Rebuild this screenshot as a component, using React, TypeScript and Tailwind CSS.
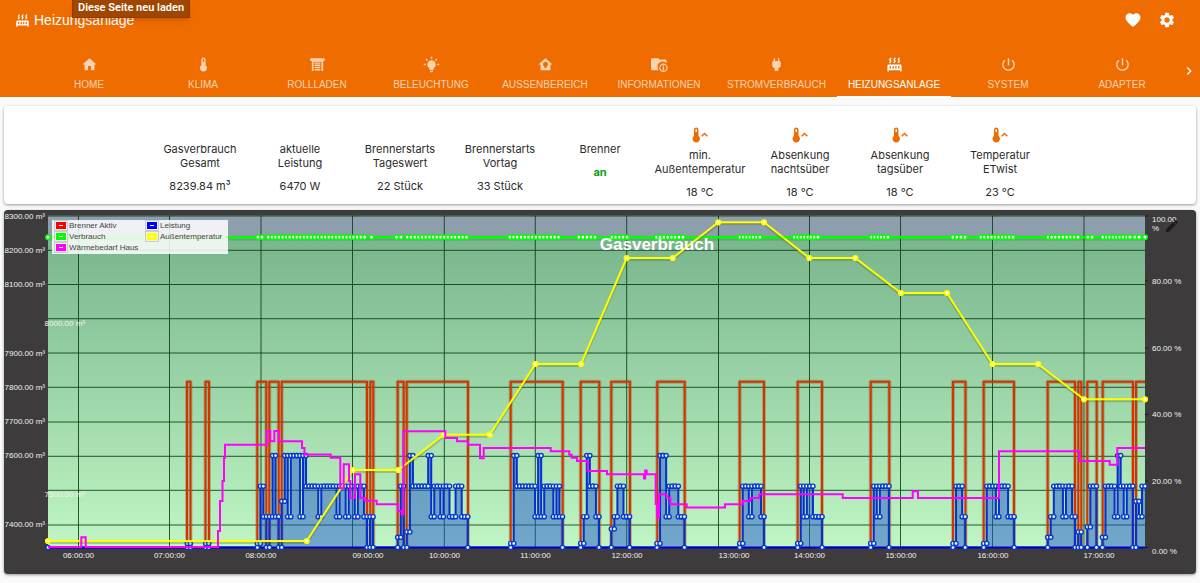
import React from "react";
import { MdChevronRight, MdFavorite, MdPowerSettingsNew, MdSettings } from "react-icons/md";

const PATHS = {
  home: "M10,20V14H14V20H19V12H22L12,3L2,12H5V20H10Z",
  thermometer:
    "M15 13V5A3 3 0 0 0 9 5V13A5 5 0 1 0 15 13M12 4A1 1 0 0 1 13 5V8H11V5A1 1 0 0 1 12 4Z",
  shutter:
    "M2 3H22V7H20V21H17.5V8H6.5V21H4V7H2V3M8 9H16V11H8V9M8 12H16V14H8V12M8 15H16V17H8V15M8 18H16V20.5H8V18Z",
  bulb: "M12,6A6,6 0 0,1 18,12C18,14.22 16.79,16.16 15,17.2V19A1,1 0 0,1 14,20H10A1,1 0 0,1 9,19V17.2C7.21,16.16 6,14.22 6,12A6,6 0 0,1 12,6M14,21V22A1,1 0 0,1 13,23H11A1,1 0 0,1 10,22V21H14M20,11H23V13H20V11M1,11H4V13H1V11M13,1V4H11V1H13M4.92,3.5L7.05,5.64L5.63,7.05L3.5,4.93L4.92,3.5M16.95,5.63L19.07,3.5L20.5,4.93L18.37,7.05L16.95,5.63Z",
  homeBulb:
    "M12 3L2 12H5V20H19V12H22L12 3M12 8A3.6 3.6 0 0 1 13.6 14.8V17H10.4V14.8A3.6 3.6 0 0 1 12 8Z",
  folderInfo:
    "M10 3L12 5H20A2 2 0 0 1 22 7V10.2A7 7 0 0 0 11 20H2A2 2 0 0 1 0 18V5A2 2 0 0 1 2 3H10M17.5 10.5A6 6 0 1 1 17.5 22.5A6 6 0 1 1 17.5 10.5M17.5 12.2A4.3 4.3 0 1 0 17.5 20.8A4.3 4.3 0 1 0 17.5 12.2M16.5 13H18.5V14.8H16.5V13M16.5 15.6H18.5V20H16.5V15.6Z",
  plug: "M16,7V3H14V7H10V3H8V7H8C7,7 6,8 6,9V14.5L9.5,18V21H14.5V18L18,14.5V9C18,8 17,7 16,7Z",
  radiator:
    "M7.95,3L6.53,5.19L7.95,7.4L5.95,10.5L4.22,9.6L5.64,7.39L4.22,5.19L6.22,2.09L7.95,3M13.95,2.89L12.53,5.1L13.95,7.3L11.95,10.4L10.22,9.5L11.64,7.3L10.22,5.1L12.22,2L13.95,2.89M20,2.89L18.56,5.1L20,7.3L18,10.4L16.25,9.5L17.67,7.3L16.25,5.1L18.25,2L20,2.89M2,22V14A2,2 0 0,1 4,12H20A2,2 0 0,1 22,14V22H20V20H4V22H2M6,14A1,1 0 0,0 5,15V17A1,1 0 0,0 7,17V15A1,1 0 0,0 6,14M10,14A1,1 0 0,0 9,15V17A1,1 0 0,0 11,17V15A1,1 0 0,0 10,14M14,14A1,1 0 0,0 13,15V17A1,1 0 0,0 15,17V15A1,1 0 0,0 14,14M18,14A1,1 0 0,0 17,15V17A1,1 0 0,0 19,17V15A1,1 0 0,0 18,14Z",
  thermoUp:
    "M10 13V5A3 3 0 0 0 4 5V13A5 5 0 1 0 10 13M7 4A1 1 0 0 1 8 5V8H6V5A1 1 0 0 1 7 4M14.9 14.4L13.5 13L18 8.5L22.5 13L21.1 14.4L18 11.3L14.9 14.4Z",
  pencil:
    "M20.71,7.04C21.1,6.65 21.1,6 20.71,5.63L18.37,3.29C18,2.9 17.35,2.9 16.96,3.29L15.12,5.12L18.87,8.87M3,17.25V21H6.75L17.81,9.93L14.06,6.18L3,17.25Z",
};

function Glyph({ name, className = "size-4" }: { name: keyof typeof PATHS; className?: string }) {
  return (
    <svg viewBox="0 0 24 24" className={className} fill="currentColor" aria-hidden="true">
      <path fillRule="evenodd" d={PATHS[name]} />
    </svg>
  );
}

const TABS: { label: string; icon: keyof typeof PATHS | "power" }[] = [
  { label: "HOME", icon: "home" },
  { label: "KLIMA", icon: "thermometer" },
  { label: "ROLLLADEN", icon: "shutter" },
  { label: "BELEUCHTUNG", icon: "bulb" },
  { label: "AUSSENBEREICH", icon: "homeBulb" },
  { label: "INFORMATIONEN", icon: "folderInfo" },
  { label: "STROMVERBRAUCH", icon: "plug" },
  { label: "HEIZUNGSANLAGE", icon: "radiator" },
  { label: "SYSTEM", icon: "power" },
  { label: "ADAPTER", icon: "power" },
];

function Header() {
  return (
    <header className="relative bg-[#ef6c00] text-white">
      <div className="flex h-10 items-center justify-between pl-[15px] pr-6">
        <h1 className="flex items-center gap-1 text-[14px]">
          <Glyph name="radiator" className="size-[15px]" />
          Heizungsanlage
        </h1>
        <div className="flex gap-4">
          <button aria-label="Favoriten">
            <MdFavorite className="size-[18px]" />
          </button>
          <button aria-label="Einstellungen">
            <MdSettings className="size-[18px]" />
          </button>
        </div>
      </div>
      <div
        role="tooltip"
        className="absolute left-[72px] top-0 h-[18px] border border-t-0 border-[#8f3d00] bg-[#9f4700] px-[5px] font-[Roboto,sans-serif] text-[11px] leading-4 font-semibold shadow-md"
      >
        Diese Seite neu laden
      </div>
      <div className="flex pt-[9px] pl-8">
        <nav className="flex flex-1 overflow-hidden" aria-label="Ansichten">
          {TABS.map((t) => (
            <a
              key={t.label}
              href="#"
              className={
                "flex h-12 shrink-0 flex-col items-center gap-1 border-b pt-[7px] text-[10px] leading-4 " +
                (t.label === "STROMVERBRAUCH" ? "w-[121px] " : "w-[114px] ") +
                (t.label === "HEIZUNGSANLAGE" ? "border-white text-white" : "border-transparent text-white/70")
              }
            >
              {t.icon === "power" ? (
                <MdPowerSettingsNew className="size-[17px]" />
              ) : (
                <Glyph name={t.icon} className="size-[17px]" />
              )}
              {t.label}
            </a>
          ))}
        </nav>
        <button aria-label="Weiter" className="flex w-[22px] items-center justify-center pb-1">
          <MdChevronRight className="size-4" />
        </button>
      </div>
    </header>
  );
}

const VALUES = [
  { lines: ["Gasverbrauch", "Gesamt"], value: "8239.84 m³" },
  { lines: ["aktuelle", "Leistung"], value: "6470 W" },
  { lines: ["Brennerstarts", "Tageswert"], value: "22 Stück" },
  { lines: ["Brennerstarts", "Vortag"], value: "33 Stück" },
  { lines: ["Brenner"], value: "an", on: true },
  { lines: ["min.", "Außentemperatur"], value: "18 °C", icon: true },
  { lines: ["Absenkung", "nachtsüber"], value: "18 °C", icon: true },
  { lines: ["Absenkung", "tagsüber"], value: "18 °C", icon: true },
  { lines: ["Temperatur", "ETwist"], value: "23 °C", icon: true },
];

function ValuesCard() {
  return (
    <section className="mx-1 mt-[9px] flex h-[98px] justify-center rounded-sm bg-white font-[Inter,sans-serif] text-[11px] leading-[14px] text-[#2b2b2b] shadow-[0_1px_3px_rgba(0,0,0,0.4)]">
      {VALUES.map((v, i) => (
        <div key={i} className={"flex w-[100px] flex-col items-center " + (v.icon ? "pt-5" : "pt-9")}>
          {v.icon && <Glyph name="thermoUp" className="mb-1 size-[18px] shrink-0 text-[#ef6c00]" />}
          {v.lines.map((l) => (
            <span key={l} className="whitespace-nowrap">
              {l}
            </span>
          ))}
          <span className={"mt-[9px] whitespace-nowrap " + (v.on ? "font-bold text-[#0a9d0a]" : "")}>{v.value}</span>
        </div>
      ))}
    </section>
  );
}

type Pt = [number, number];
const LEFT = 48;
const RIGHT = 1145;
const BASE = 547.5;
const STEP = 3.047;

const GRID_X = [78.5, 169.5, 261, 352.5, 444.3, 535.3, 626.7, 718.5, 809.5, 900.5, 992.5, 1084];
const GRID_Y = [216, 250.3, 284.5, 318.7, 353, 387.3, 422, 456.3, 490.3, 525];
const LEFT_LABELS: [string, number, number][] = [
  ["8300.00 m³", 45, 216], ["8200.00 m³", 45, 250], ["8100.00 m³", 45, 284], ["8000.00 m³", 85, 323],
  ["7900.00 m³", 45, 353], ["7800.00 m³", 45, 387], ["7700.00 m³", 45, 421], ["7600.00 m³", 45, 455],
  ["7500.00 m³", 85, 494], ["7400.00 m³", 45, 524],
];
const RIGHT_LABELS: [string, number][] = [
  ["100.00", 219], ["%", 228], ["80.00 %", 281], ["60.00 %", 348], ["40.00 %", 414], ["20.00 %", 481], ["0.00 %", 551],
];
const TIME_LABELS: [string, number][] = [
  ["06:00:00", 78.5], ["07:00:00", 169.5], ["08:00:00", 261], ["09:00:00", 368], ["10:00:00", 444.5], ["11:00:00", 535.5],
  ["12:00:00", 627], ["13:00:00", 734], ["14:00:00", 809.5], ["15:00:00", 901], ["16:00:00", 993], ["17:00:00", 1099],
];

const BURNER: Pt[] = [
  [187, 190.5], [205.5, 209], [257.3, 266.3], [269.3, 278.7], [281.7, 367], [370.3, 373.3], [397.7, 403.7], [406.7, 468],
  [510.7, 562.7], [580.7, 599.3], [611.3, 630], [657.3, 684.7], [739.7, 764], [797.7, 822], [870.7, 889.3], [953, 965.5],
  [983.7, 1014], [1047.7, 1075], [1078.3, 1081.3], [1087.3, 1096.7], [1102.7, 1133],
];

/* Output level of the burner per two-minute interval */
const LEVELS: Record<string, number> = {
  "0": BASE, A: 516.7, B: 486.2, C: 455.6, D: 501.3, e: 543.5, f: 537.3, g: 532, h: 529, i: 527,
};
const RUNS: [number, string][] = [
  [187.3, "e"], [205.7, "e"],
  [257.3, "eBA0ACA0DCACCCACBBBBABBBBBABBABBABBA0A"],
  [397.7, "fB0gCBBBBBCABBABBAABBAA"],
  [510.7, "eCBBBBBBACABBBABA"],
  [580.7, "eACBBA"], [611.3, "hABBAA"], [657, "eCCABBBAA"], [739.7, "eBBABBBA"], [797.7, "eBABBAAA"],
  [870.7, "eBABBB"], [953, "eBBA"], [983.7, "eBBBABBBAA"], [1047.7, "fABBBABBA0g"], [1087.3, "iBB"],
  [1102.4, "fBBBACBABB0DAB"],
];

const DEMAND: Pt[] = [
  [48, 547], [81.3, 537.3], [85.7, 547], [218, 531], [220, 501], [222.5, 481], [224, 457.7], [225, 444.7], [266.7, 431],
  [270.3, 441.3], [274.3, 431], [278.7, 441.3], [302, 448], [304.5, 454.5], [330.7, 457.7], [340.3, 488.3], [343.7, 464.3],
  [349, 481], [350.3, 498], [355, 474.3], [360.3, 498], [364.7, 500.8], [376.7, 504.3], [398, 511], [401.7, 514.5],
  [403.5, 431.3], [445.3, 438], [457, 441.3], [468, 444.7], [480, 458.3], [483.7, 448], [550.7, 451.3], [569.3, 454.7],
  [571.7, 457.7], [577, 461], [587.7, 471], [607, 474.3], [644, 478.5], [645.2, 470.5], [646.7, 474.3], [655.7, 504],
  [657.3, 517.7], [659, 494.3], [666.7, 498], [670.3, 504.3], [686.7, 507.5], [725, 504.3], [742.7, 501], [750.3, 498],
  [759.3, 494.3], [842.7, 498], [912.7, 491.3], [918, 498], [999, 451.3], [1079.3, 461], [1109.7, 464.7], [1117.3, 448],
];

const OUTSIDE: Pt[] = [
  [48, 541], [306.7, 541], [352.7, 470], [398.3, 470], [443.7, 434.7], [489.7, 434.7], [535.5, 364], [581, 364],
  [626.7, 258], [672.7, 258], [718.3, 222.3], [764, 222.3], [809.3, 258], [855.3, 258], [901, 293], [947, 293],
  [992.5, 364], [1038, 364], [1084, 399.3], [1145, 399.3],
];

const GAS_RUNS: Pt[] = [
  [48, 48], [258, 262], [268.5, 364.5], [371.5, 371.5], [396.5, 401], [407.5, 466.5], [510, 558.5], [579, 595], [612, 627],
  [656.5, 683], [740, 760], [794.5, 818], [871.5, 888], [953, 965], [981, 1013], [1048, 1078], [1088, 1092], [1103, 1130],
  [1135, 1139], [1145, 1145],
];

const burnerPath = BURNER.map(([a, b]) => `M${a} 547V381.7H${b}V547`).join("") + "M1136 547V381.7H1145";

const demandPath = `M48 547` + DEMAND.map(([x, y]) => `H${x}V${y}`).join("") + `H${RIGHT}`;

let outputPath = `M${LEFT} ${BASE}`;
const outputDots: Pt[] = [[LEFT, BASE]];
RUNS.forEach(([start, run], r) => {
  outputDots.push([start, BASE]);
  run.split("").forEach((c, i) => {
    const a = start + i * STEP;
    const y = LEVELS[c];
    outputPath += `H${a}V${y}H${a + STEP}`;
    outputDots.push([a, y], [a + STEP, y]);
  });
  const end = start + run.length * STEP;
  if (r < RUNS.length - 1) {
    outputPath += `V${BASE}`;
    outputDots.push([end, BASE]);
  }
});
const outputArea = outputPath + `V${BASE}H${LEFT}Z`;

const gasDots: number[] = GAS_RUNS.flatMap(([a, b]) => {
  const n = Math.round((b - a) / 3.6);
  return Array.from({ length: n + 1 }, (_, i) => (n ? a + ((b - a) * i) / n : a));
});

const LEGEND = [
  ["Brenner Aktiv", "bg-[#ff0000]"],
  ["Leistung", "bg-[#0000ff]"],
  ["Verbrauch", "bg-[#00ff00]"],
  ["Außentemperatur", "bg-[#ffff00]"],
  ["Wärmebedarf Haus", "bg-[#ff00ff]"],
];

function Chart() {
  const outsidePoints = OUTSIDE.map((p) => p.join(",")).join(" ");
  return (
    <section className="relative mx-1 mt-[6px] overflow-hidden rounded-sm bg-[#3e3b3c] shadow-[0_1px_3px_rgba(0,0,0,0.4)]">
      <svg viewBox="4 210 1192 364" className="block h-auto w-full" role="img" aria-label="Gasverbrauch">
        <defs>
          <linearGradient id="sky" x1="0" y1="0" x2="0" y2="1">
            <stop offset="0" stopColor="#8f9fae" />
            <stop offset="1" stopColor="#8c9dab" />
          </linearGradient>
          <linearGradient id="gas" x1="0" y1="0" x2="0" y2="1">
            <stop offset="0" stopColor="#79b58d" />
            <stop offset="1" stopColor="#c0f6c4" />
          </linearGradient>
        </defs>
        <rect x="48" y="215.5" width="1097" height="22" fill="url(#sky)" />
        <rect x="48" y="237" width="1097" height="311" fill="url(#gas)" />
        <g stroke="#0b3d12" strokeOpacity="0.85" strokeWidth="1">
          {GRID_X.map((x) => (
            <line key={x} x1={x} x2={x} y1="215.5" y2="548" />
          ))}
          {GRID_Y.map((y) => (
            <line key={y} x1="48" x2="1145" y1={y} y2={y} />
          ))}
        </g>
        <g fill="none" strokeLinejoin="round">
          <path d={burnerPath} stroke="#7a4a10" strokeOpacity="0.3" strokeWidth="4" />
          <path d={burnerPath} stroke="#d93000" strokeWidth="2" />
          <line x1="48" x2="1145" y1="239.5" y2="239.5" stroke="#1d7a2a" strokeOpacity="0.25" strokeWidth="2" />
          <line x1="48" x2="1145" y1="237.2" y2="237.2" stroke="#00ff00" strokeWidth="2.4" />
        </g>
        <g fill="#ffffff" stroke="#00ff00" strokeWidth="1.5">
          {gasDots.map((x, i) => (
            <circle key={i} cx={x} cy="237.2" r="2.2" />
          ))}
        </g>
        <path d={outputArea} fill="#2258cf" fillOpacity="0.5" />
        <path d={outputPath} fill="none" stroke="#0630cc" strokeWidth="2" />
        <line x1="48" x2="1145" y1={BASE} y2={BASE} stroke="#0000cd" strokeWidth="2" />
        <g fill="#dcf5f2" stroke="#0a38cc" strokeWidth="1.4">
          {outputDots.map(([x, y], i) => (
            <circle key={i} cx={x} cy={y} r="2.1" />
          ))}
        </g>
        <g fill="none" strokeLinejoin="round">
          <polyline points={outsidePoints} stroke="#4c6b20" strokeOpacity="0.3" strokeWidth="3" transform="translate(0 1.5)" />
          <polyline points={outsidePoints} stroke="#ffff00" strokeWidth="2" />
        </g>
        <g fill="#ffffff" stroke="#ffff00" strokeWidth="1.8">
          {OUTSIDE.map(([x, y]) => (
            <circle key={x} cx={x} cy={y} r="2.2" />
          ))}
        </g>
        <path d={demandPath} fill="none" stroke="#ff00ff" strokeWidth="2" />
        <g stroke="#1b1b1b">
          {[216, 281, 348, 414.5, 481, 547.5].map((y) => (
            <line key={y} x1="1145" x2="1148" y1={y} y2={y} />
          ))}
        </g>
        <g fill="#f2f2f2" fontSize="8" fontFamily="Liberation Sans, Arial, sans-serif">
          {LEFT_LABELS.map(([t, x, y]) => (
            <text key={t} x={x} y={y + 3} textAnchor="end">
              {t}
            </text>
          ))}
          {RIGHT_LABELS.map(([t, y]) => (
            <text key={t} x="1152" y={y + 3}>
              {t}
            </text>
          ))}
          {TIME_LABELS.map(([t, x]) => (
            <text key={t} x={x} y="558" textAnchor="middle">
              {t}
            </text>
          ))}
        </g>
        <text x="657" y="250" textAnchor="middle" fill="#ffffff" fontSize="17" fontWeight="bold" fontFamily="Liberation Sans, Arial, sans-serif">
          Gasverbrauch
        </text>
      </svg>
      <ul className="absolute left-12 top-[10px] grid grid-cols-[91px_85px] bg-white/85 pb-px text-[8px] leading-[11px] text-[#444444]">
        {LEGEND.map(([name, color]) => (
          <li key={name} className="flex h-[11px] items-center gap-px pl-0.5 whitespace-nowrap">
            <span className="flex border border-[#cccccc] p-px">
              <span className={"flex h-[7px] w-2.5 items-center justify-center " + color}>
                <span className="h-px w-1 bg-white" />
              </span>
            </span>
            {name}
          </li>
        ))}
      </ul>
      <button aria-label="Bearbeiten" className="absolute top-2 right-4 text-[#1c1b1b]">
        <Glyph name="pencil" />
      </button>
    </section>
  );
}

export default function App() {
  return (
    <main className="min-h-screen bg-[#fafafa] font-['Liberation_Sans',Arial,sans-serif]">
      <Header />
      <ValuesCard />
      <Chart />
    </main>
  );
}
